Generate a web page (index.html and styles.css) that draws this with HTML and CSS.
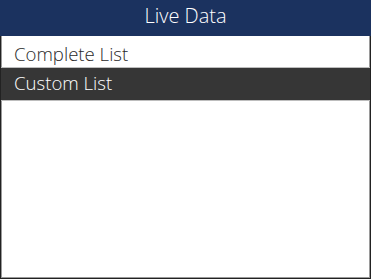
FILE: index.html
```html
<!DOCTYPE html>
<html>
<head>
<meta charset="utf-8">
<link rel="stylesheet" href="styles.css">
</head>
<body>
<div class="screen">
  <div class="header">Live Data</div>
  <div class="body">
    <div class="item">Complete List</div>
    <div class="item selected">Custom List</div>
  </div>
</div>
</body>
</html>
```
FILE: styles.css
```css
html, body {
  margin: 0;
  padding: 0;
  background: #1a1a1a;
}
.screen {
  width: 371px;
  height: 279px;
  display: flex;
  flex-direction: column;
  font-family: "Open Sans", "Noto Sans", sans-serif;
  font-weight: 300;
}
.header {
  box-sizing: border-box;
  height: 36px;
  padding-bottom: 4px;
  background: #1b325f;
  color: #ffffff;
  font-size: 20px;
  line-height: 32px;
  text-align: center;
}
.body {
  flex: 1;
  background: #ffffff;
  border-left: 1px solid #222;
  border-right: 1px solid #222;
  border-bottom: 1px solid #222;
  box-shadow: inset -1px -1px 0 #9a9a9a, inset 1px 0 0 #9a9a9a;
}
.item {
  box-sizing: border-box;
  height: 32px;
  padding-top: 5px;
  line-height: 26px;
  padding-left: 13px;
  font-size: 18.6px;
  color: #2a2a2a;
  border-bottom: 1px solid #bdbdbd;
}
.item.selected {
  background: #363636;
  color: #ffffff;
  height: 33px;
  padding-top: 0;
  line-height: 30px;
}
```
